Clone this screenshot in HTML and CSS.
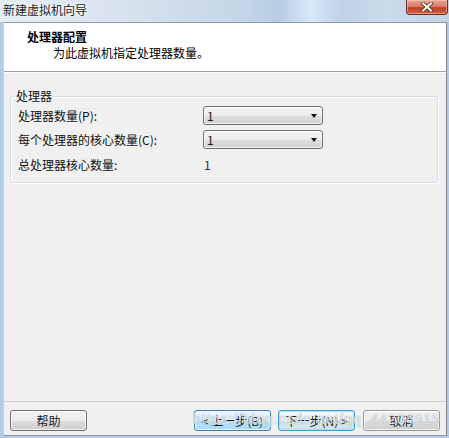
FILE: index.html
```html
<!DOCTYPE html>
<html lang="zh-CN">
<head>
<meta charset="utf-8">
<title>新建虚拟机向导</title>
<link rel="stylesheet" href="styles.css">
</head>
<body>
<div class="window">
  <div class="titlebar">
    <span class="title">新建虚拟机向导</span>
    <button class="close" aria-label="关闭">
      <svg width="16" height="10" viewBox="0 0 16 10">
        <path d="M4 1.5 L12 8.5 M12 1.5 L4 8.5" stroke="#5a2a22" stroke-width="3.6" stroke-linecap="square"/>
        <path d="M4 1.5 L12 8.5 M12 1.5 L4 8.5" stroke="#ffffff" stroke-width="2" stroke-linecap="square"/>
      </svg>
    </button>
  </div>
  <div class="frame">
    <div class="client">
      <div class="header">
        <div class="heading">处理器配置</div>
        <div class="subtitle">为此虚拟机指定处理器数量。</div>
      </div>
      <div class="body">
        <fieldset class="group">
          <legend>处理器</legend>
          <div class="grid">
            <span class="label">处理器数量(P):</span>
            <div class="combo"><span>1</span><span class="arrow"></span></div>
            <span class="label">每个处理器的核心数量(C):</span>
            <div class="combo"><span>1</span><span class="arrow"></span></div>
            <span class="label total">总处理器核心数量:</span>
            <span class="value total">1</span>
          </div>
        </fieldset>
      </div>
      <div class="footer">
        <button class="btn">帮助</button>
        <div class="spacer"></div>
        <button class="btn hover">&lt; 上一步(B)</button>
        <button class="btn focus">下一步(N) &gt;</button>
        <button class="btn">取消</button>
      </div>
    </div>
  </div>
  <div class="watermark">https://blog.csdn.net/qq_44204915</div>
</div>
</body>
</html>
```
FILE: styles.css
```css
html, body {
  margin: 0;
  padding: 0;
}
body {
  font-family: "Noto Sans CJK SC", "Liberation Sans", sans-serif;
  font-size: 12px;
  color: #1a1a1a;
  background: #f0f0f0;
}
.window {
  position: relative;
  width: 449px;
  height: 438px;
  display: flex;
  flex-direction: column;
  background: #b3cbe4;
  overflow: hidden;
}
.titlebar {
  height: 22px;
  display: flex;
  align-items: flex-start;
  background: linear-gradient(90deg, #e4ecf4 0%, #dbe6f0 20%, #cfdcea 40%, #c3d5e7 55%, #b6cce2 62%, #d9e8f6 69%, #bfd2e6 76%, #cbdaea 86%, #c3d3e4 100%);
}
.title {
  padding-left: 3px;
  line-height: 20px;
  color: #1c1c1c;
  text-shadow: 0 0 6px #ffffff, 0 0 3px #ffffff;
}
.close {
  margin-left: auto;
  margin-right: 1px;
  width: 42px;
  height: 15px;
  padding: 0;
  border: 1px solid #6b3025;
  border-top: none;
  border-radius: 0 0 4px 4px;
  background: linear-gradient(180deg, #e8a595 0%, #d8806a 45%, #c2402a 55%, #d06048 100%);
  box-shadow: inset 0 0 0 1px rgba(255, 220, 210, 0.45);
  display: flex;
  align-items: center;
  justify-content: center;
}
.frame {
  flex: 1;
  display: flex;
  padding: 0 2px 2px 3px;
  min-height: 0;
}
.client {
  flex: 1;
  display: flex;
  flex-direction: column;
  background: #f0f0f0;
  border-top: 1px solid #8e9cab;
  border-left: 1px solid #c3d3e3;
  border-right: 1px solid #7d8894;
  border-bottom: 1px solid #8a96a3;
}
.header {
  height: 49px;
  box-sizing: border-box;
  background: #ffffff;
  padding: 6px 0 0 23px;
  border-bottom: 1px solid #a0a0a0;
  box-shadow: 0 1px 0 #ffffff;
  line-height: 16px;
}
.heading {
  font-weight: bold;
  color: #000;
}
.subtitle {
  padding-left: 26px;
  color: #000;
}
.body {
  flex: 1;
  padding-top: 16px;
}
.group {
  margin: 0 8px 0 6px;
  padding: 2px 7px 9px 7px;
  border: 1px solid #d5dfe5;
  border-radius: 3px;
  box-shadow: inset 1px 1px 0 #ffffff, 1px 1px 0 #ffffff;
}
.group legend {
  padding: 0 1px;
  margin-left: -3px;
  line-height: 16px;
  color: #111;
}
.grid {
  display: grid;
  grid-template-columns: 185px 120px;
  row-gap: 5px;
  align-items: center;
}
.label {
  line-height: 16px;
  color: #111;
}
.total {
  margin-top: 3px;
}
.value {
  padding-left: 1px;
  color: #2b2b6b;
  line-height: 16px;
}
.combo {
  height: 19px;
  box-sizing: border-box;
  border: 1px solid #707070;
  border-radius: 3px;
  background: linear-gradient(180deg, #f3f3f3 0%, #ebebeb 50%, #dddddd 51%, #d2d2d2 100%);
  box-shadow: inset 0 0 0 1px rgba(255, 255, 255, 0.7);
  display: flex;
  align-items: center;
  padding: 0 5px 0 3px;
  line-height: 16px;
}
.combo .arrow {
  margin-left: auto;
  width: 0;
  height: 0;
  border-left: 3.5px solid transparent;
  border-right: 3.5px solid transparent;
  border-top: 4px solid #111;
}
.footer {
  display: flex;
  align-items: flex-start;
  gap: 7px;
  padding: 8px 6px 4px 6px;
  border-top: 1px solid #cfcfcf;
}
.spacer {
  flex: 1;
}
.btn {
  width: 77px;
  height: 21px;
  padding: 0;
  font-family: "Noto Sans CJK SC", "Liberation Sans", sans-serif;
  font-size: 12px;
  line-height: 16px;
  color: #1a1a1a;
  border: 1px solid #707070;
  border-radius: 3px;
  background: linear-gradient(180deg, #f2f2f2 0%, #ebebeb 50%, #dddddd 51%, #cfcfcf 100%);
  box-shadow: inset 0 0 0 1px rgba(255, 255, 255, 0.75);
}
.btn:last-child {
  margin-left: 1px;
  border-color: #9a9a9a;
}
.btn.hover {
  border-color: #3c7fb1;
  background: linear-gradient(180deg, #eaf6fd 0%, #d9f0fc 50%, #bee6fd 51%, #a7d9f5 100%);
}
.btn.focus {
  border-color: #3c9fd8;
  background: linear-gradient(180deg, #f4f9fc 0%, #eaf2f7 50%, #dbe7ef 51%, #d0e0ea 100%);
  box-shadow: inset 0 0 0 1px #a8e2f8;
}
.watermark {
  position: absolute;
  left: 193px;
  top: 411px;
  font-family: "Liberation Sans", sans-serif;
  font-size: 14px;
  line-height: 17px;
  letter-spacing: 1px;
  color: rgba(255, 255, 255, 0.75);
  text-shadow: 0 0 1px rgba(100, 110, 130, 0.8);
  pointer-events: none;
}
```
